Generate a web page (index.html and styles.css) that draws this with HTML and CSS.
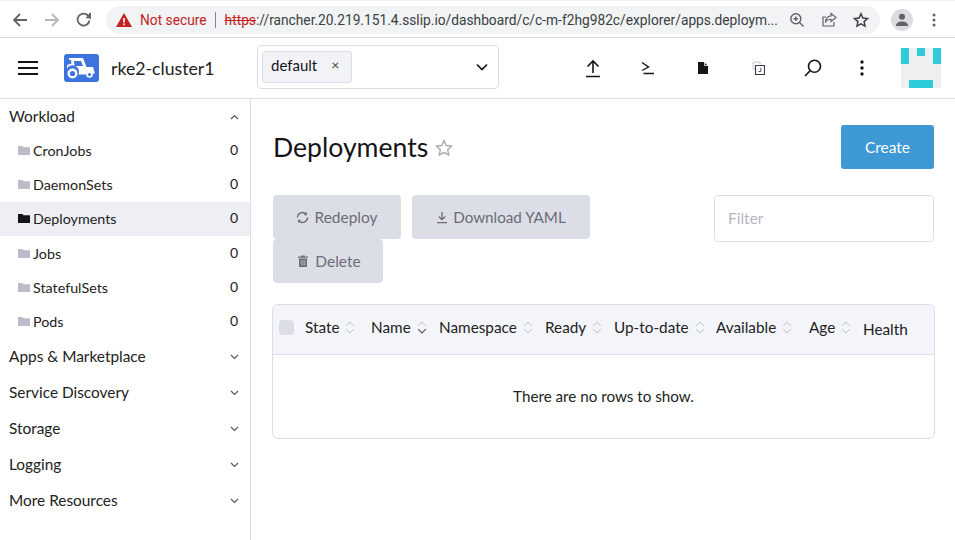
FILE: index.html
```html
<!DOCTYPE html>
<html lang="en">
<head>
<meta charset="utf-8">
<title>Deployments</title>
<link rel="stylesheet" href="styles.css">
</head>
<body>
<div class="chrome">
  <svg class="nav-ic" width="18" height="18" viewBox="0 0 18 18"><path d="M16 9H3M9 3 3 9l6 6" fill="none" stroke="#5f6368" stroke-width="1.8"/></svg>
  <svg class="nav-ic" width="18" height="18" viewBox="0 0 18 18"><path d="M2 9h13M9 3l6 6-6 6" fill="none" stroke="#b5b7ba" stroke-width="1.8"/></svg>
  <svg class="nav-ic" width="18" height="18" viewBox="0 0 18 18"><path d="M14.5 9.5a6 6 0 1 1-1.6-5.1L15 6.5V2" fill="none" stroke="#5f6368" stroke-width="1.8"/><path d="M15.8 1.6v5.6h-5.600z" fill="#5f6368"/></svg>
  <div class="omni">
    <svg width="16" height="14" viewBox="0 0 16 14"><path d="M8 0 16 14H0z" fill="#c5221f"/><path d="M7.2 5h1.6v4.6H7.2zM7.2 10.6h1.6v1.6H7.2z" fill="#fff"/></svg>
    <span class="insecure">Not secure</span>
    <span class="omni-sep"></span>
    <span class="url"><s class="https">https</s>://rancher.20.219.151.4.sslip.io/dashboard/c/c-m-f2hg982c/explorer/apps.deploym...</span>
    <span class="omni-icons">
      <svg width="16" height="16" viewBox="0 0 16 16"><circle cx="6.8" cy="6.8" r="5" fill="none" stroke="#5f6368" stroke-width="1.4"/><path d="m10.5 10.5 4 4M4.5 6.8h4.6M6.8 4.5v4.6" fill="none" stroke="#5f6368" stroke-width="1.4"/></svg>
      <svg width="16" height="16" viewBox="0 0 16 16"><path d="M13 10v4H2V5h3" fill="none" stroke="#5f6368" stroke-width="1.2"/><path d="M10 1.5 15 5.5 10 9.5V7.300C7.500 7.100 5.500 8 4.500 10.500 4.500 7 6.500 4.200 10 3.800Z" fill="none" stroke="#5f6368" stroke-width="1.2"/></svg>
      <svg width="16" height="16" viewBox="0 0 16 16"><path d="m8 1.800 1.900 4.200 4.600.5-3.400 3.100.9 4.500L8 11.800l-4 2.300.9-4.500L1.500 6.500l4.600-.5z" fill="none" stroke="#3c4043" stroke-width="1.500"/></svg>
    </span>
  </div>
  <span class="avatar"><svg width="14" height="14" viewBox="0 0 14 14"><circle cx="7" cy="3.800" r="3" fill="#5f6368"/><path d="M1 13c0-3.300 3-4.500 6-4.500s6 1.200 6 4.500z" fill="#5f6368"/></svg></span>
  <svg class="kebab-c" width="4" height="14" viewBox="0 0 4 14"><circle cx="2" cy="2" r="1.500" fill="#5f6368"/><circle cx="2" cy="7" r="1.500" fill="#5f6368"/><circle cx="2" cy="12" r="1.500" fill="#5f6368"/></svg>
</div>

<header class="topbar">
  <div class="burger"><i></i><i></i><i></i></div>
  <span class="logo">
    <svg width="35" height="28" viewBox="0 0 35 28"><path d="M5 4h14l3.500 9H29l2 6.500h-3a3.500 3.500 0 0 0-6 1H14.500a6.500 6.500 0 0 0-11.500-6v-3.500l4.500-1.500-.5-3.500H5zM10 7l.5 5h8.500l-2-5z" fill="#fff" fill-rule="evenodd"/><circle cx="8.500" cy="19.500" r="3.800" fill="none" stroke="#fff" stroke-width="2.400"/><circle cx="25.500" cy="20.500" r="2.400" fill="none" stroke="#fff" stroke-width="1.800"/></svg>
  </span>
  <span class="cluster">rke2-cluster1</span>
  <div class="ns-select">
    <span class="chip">default<span class="chip-x">×</span></span>
    <svg class="ns-caret" width="12" height="8" viewBox="0 0 12 8"><path d="m1 1.500 5 5 5-5" fill="none" stroke="#141419" stroke-width="1.700"/></svg>
  </div>
  <div class="tools">
    <span class="tool"><svg width="18" height="19" viewBox="0 0 18 19"><path d="M9 14V2M3.500 7.500 9 2l5.500 5.500M2 17.500h14" fill="none" stroke="#141419" stroke-width="1.600"/></svg></span>
    <span class="tool"><svg width="14" height="14" viewBox="0 0 14 14"><path d="M1 1.500 7.500 6 1 9.500M2.500 12.500H13" fill="none" stroke="#141419" stroke-width="1.400"/></svg></span>
    <span class="tool"><svg width="10" height="12" viewBox="0 0 10 12"><path d="M0 0h6l4 4v8H0z" fill="#141419"/><path d="M6.500 0v3.500H10" fill="none" stroke="#fff" stroke-width=".8"/></svg></span>
    <span class="tool"><svg width="13" height="14" viewBox="0 0 13 14"><path d="M8 3V1H1v7h2" fill="none" stroke="#a8a8b4" stroke-width="1" stroke-dasharray="1.500 1"/><path d="M3.500 4.500H12.500v9H3.500z" fill="none" stroke="#3f3f4a" stroke-width="1.200"/><path d="M8.800 6.800v3.700H6.500" fill="none" stroke="#3f3f4a" stroke-width=".9"/></svg></span>
    <span class="tool"><svg width="18" height="18" viewBox="0 0 18 18"><circle cx="10.500" cy="7.300" r="6" fill="none" stroke="#141419" stroke-width="1.600"/><path d="M6.200 11.600 1 17" fill="none" stroke="#141419" stroke-width="1.600"/></svg></span>
    <span class="tool tool-last"><svg width="4" height="16" viewBox="0 0 4 16"><circle cx="2" cy="2" r="1.700" fill="#141419"/><circle cx="2" cy="8" r="1.700" fill="#141419"/><circle cx="2" cy="14" r="1.700" fill="#141419"/></svg></span>
  </div>
  <svg class="identicon" width="40" height="40" viewBox="0 0 40 40"><rect width="40" height="40" fill="#efefef"/><path d="M0 0h8v16H0zM32 0h8v16h-8zM16 0h8v8h-8zM8 32h24v8H8z" fill="#2ccdd8"/></svg>
</header>

<div class="shell">
  <nav class="side">
    <div class="group group-open">Workload<svg width="9" height="6" viewBox="0 0 9 6"><path d="m1 5 3.500-3.500L8 5" fill="none" stroke="#55555f" stroke-width="1.200"/></svg></div>
    <a class="item"><svg class="folder" width="12" height="9" viewBox="0 0 12 9"><path d="M0 0h4.500l1 1.300H12V9H0z"/></svg><span>CronJobs</span><b>0</b></a>
    <a class="item"><svg class="folder" width="12" height="9" viewBox="0 0 12 9"><path d="M0 0h4.500l1 1.300H12V9H0z"/></svg><span>DaemonSets</span><b>0</b></a>
    <a class="item active"><svg class="folder" width="12" height="9" viewBox="0 0 12 9"><path d="M0 0h4.500l1 1.300H12V9H0z"/></svg><span>Deployments</span><b>0</b></a>
    <a class="item"><svg class="folder" width="12" height="9" viewBox="0 0 12 9"><path d="M0 0h4.500l1 1.300H12V9H0z"/></svg><span>Jobs</span><b>0</b></a>
    <a class="item"><svg class="folder" width="12" height="9" viewBox="0 0 12 9"><path d="M0 0h4.500l1 1.300H12V9H0z"/></svg><span>StatefulSets</span><b>0</b></a>
    <a class="item"><svg class="folder" width="12" height="9" viewBox="0 0 12 9"><path d="M0 0h4.500l1 1.300H12V9H0z"/></svg><span>Pods</span><b>0</b></a>
    <div class="group">Apps &amp; Marketplace<svg width="9" height="6" viewBox="0 0 9 6"><path d="m1 1 3.500 3.500L8 1" fill="none" stroke="#55555f" stroke-width="1.200"/></svg></div>
    <div class="group">Service Discovery<svg width="9" height="6" viewBox="0 0 9 6"><path d="m1 1 3.500 3.500L8 1" fill="none" stroke="#55555f" stroke-width="1.200"/></svg></div>
    <div class="group">Storage<svg width="9" height="6" viewBox="0 0 9 6"><path d="m1 1 3.500 3.500L8 1" fill="none" stroke="#55555f" stroke-width="1.200"/></svg></div>
    <div class="group">Logging<svg width="9" height="6" viewBox="0 0 9 6"><path d="m1 1 3.500 3.500L8 1" fill="none" stroke="#55555f" stroke-width="1.200"/></svg></div>
    <div class="group">More Resources<svg width="9" height="6" viewBox="0 0 9 6"><path d="m1 1 3.500 3.500L8 1" fill="none" stroke="#55555f" stroke-width="1.200"/></svg></div>
  </nav>

  <main class="main">
    <div class="title-row">
      <h1>Deployments</h1>
      <svg class="fav" width="18" height="17" viewBox="0 0 18 17"><path d="m9 1.500 2.300 5 5.400.6-4 3.700 1.100 5.300L9 13.400l-4.800 2.700 1.100-5.300-4-3.700 5.400-.6z" fill="none" stroke="#a9a9b3" stroke-width="1.400"/></svg>
      <button class="create">Create</button>
    </div>
    <div class="action-row">
      <div class="actions">
        <button class="act act-redeploy"><svg width="13" height="13" viewBox="0 0 13 13"><path d="M1.500 6.500a5 5 0 0 1 8.800-3.200M11.500 6.500a5 5 0 0 1-8.800 3.200" fill="none" stroke="#6c6c76" stroke-width="1.400"/><path d="M11 1v3.200H7.800zM2 12V8.800h3.200z" fill="#6c6c76"/></svg>Redeploy</button>
        <button class="act act-yaml"><svg width="12" height="13" viewBox="0 0 12 13"><path d="M6 1v7.500M2.800 5.500 6 8.700l3.200-3.200M1 11.700h10" fill="none" stroke="#6c6c76" stroke-width="1.300"/></svg>Download YAML</button>
        <button class="act act-delete"><svg width="10" height="12" viewBox="0 0 10 12"><path d="M0 1.500h3.200V.5h3.600v1H10v1.300H0zM1 3.600h8V12H1z" fill="#6c6c76"/><path d="M3.200 5v5.500M5 5v5.500M6.800 5v5.500" stroke="#dcdee7" stroke-width=".6"/></svg>Delete</button>
      </div>
      <div class="filter">Filter</div>
    </div>
    <section class="table">
      <div class="thead">
        <span class="check"></span>
        <span class="th c-state">State<svg class="sort" width="10" height="13" viewBox="0 0 9 12"><path d="M1 4.500 4.500 1 8 4.500M1 7.500 4.500 11 8 7.500" fill="none" stroke="#bcbcc4" stroke-width=".9"/></svg></span>
        <span class="th c-name">Name<svg class="sort" width="10" height="13" viewBox="0 0 9 12"><path d="M1 4.500 4.500 1 8 4.500" fill="none" stroke="#bcbcc4" stroke-width=".9"/><path d="M1 7.500 4.500 11 8 7.500" fill="none" stroke="#55555f" stroke-width="1.100"/></svg></span>
        <span class="th c-ns">Namespace<svg class="sort" width="10" height="13" viewBox="0 0 9 12"><path d="M1 4.500 4.500 1 8 4.500M1 7.500 4.500 11 8 7.500" fill="none" stroke="#bcbcc4" stroke-width=".9"/></svg></span>
        <span class="th c-ready">Ready<svg class="sort" width="10" height="13" viewBox="0 0 9 12"><path d="M1 4.500 4.500 1 8 4.500M1 7.500 4.500 11 8 7.500" fill="none" stroke="#bcbcc4" stroke-width=".9"/></svg></span>
        <span class="th c-utd">Up-to-date<svg class="sort" width="10" height="13" viewBox="0 0 9 12"><path d="M1 4.500 4.500 1 8 4.500M1 7.500 4.500 11 8 7.500" fill="none" stroke="#bcbcc4" stroke-width=".9"/></svg></span>
        <span class="th c-avail">Available<svg class="sort" width="10" height="13" viewBox="0 0 9 12"><path d="M1 4.500 4.500 1 8 4.500M1 7.500 4.500 11 8 7.500" fill="none" stroke="#bcbcc4" stroke-width=".9"/></svg></span>
        <span class="th c-age">Age<svg class="sort" width="10" height="13" viewBox="0 0 9 12"><path d="M1 4.500 4.500 1 8 4.500M1 7.500 4.500 11 8 7.500" fill="none" stroke="#bcbcc4" stroke-width=".9"/></svg></span>
        <span class="th c-health">Health</span>
      </div>
      <div class="empty">There are no rows to show.</div>
    </section>
  </main>
</div>
</body>
</html>
```

FILE: styles.css
```css
* { box-sizing: border-box; }
html, body { margin: 0; height: 100%; }
body { width: 955px; height: 540px; overflow: hidden; background: #fff; font-family: Lato, "Liberation Sans", sans-serif; color: #141419; }

.chrome { height: 38px; display: flex; align-items: center; padding: 1px 0 0 11px; border-top: 1px solid #f1f3f4; border-bottom: 1px solid #dadce0; }
.nav-ic { margin-right: 14px; flex: none; }
.omni { margin-left: -1px; width: 774px; height: 28px; background: #f1f3f4; border-radius: 14px; display: flex; align-items: center; padding-left: 10px; font-family: Roboto, "Liberation Sans", sans-serif; font-size: 13.750px; flex: none; }
.insecure { color: #c5221f; margin-left: 8px; }
.omni-sep { width: 1px; height: 16px; background: #80868b; margin: 0 9px 0 8px; }
.url { color: #3c4043; white-space: nowrap; width: 560px; }
.https { color: #c5221f; }
.omni-icons { display: flex; gap: 16px; margin-left: 4px; }
.avatar { width: 22px; height: 22px; border-radius: 50%; background: #dadce0; display: flex; align-items: center; justify-content: center; margin-left: 11px; flex: none; }
.kebab-c { margin-left: 19px; flex: none; }

.topbar { height: 61px; border-bottom: 1px solid #dcdee7; display: flex; align-items: center; }
.burger { width: 20px; margin-left: 18px; display: flex; flex-direction: column; gap: 4px; }
.burger i { display: block; height: 2px; background: #141419; }
.logo { width: 35px; height: 28px; margin-left: 26px; background: #3d74e0; border-radius: 3px; display: flex; align-items: center; justify-content: center; }
.cluster { font-size: 17.700px; margin-left: 12px; width: 146px; color: #222; }
.ns-select { width: 242px; height: 44px; border: 1px solid #dcdee7; border-radius: 4px; display: flex; align-items: center; padding-left: 4px; margin-top: -3px; position: relative; }
.chip { height: 32px; width: 90px; display: flex; align-items: center; padding: 0 0 4px 8px; background: #f2f3f7; border: 1px solid #dcdee7; border-radius: 3px; font-size: 15px; }
.chip-x { margin-left: 14px; font-size: 14px; color: #444; }
.ns-caret { position: absolute; right: 10px; top: 17px; }
.tools { display: flex; align-items: center; margin-left: 66.500px; }
.tool { width: 55px; display: flex; justify-content: center; align-items: center; }
.tool-last { width: 43px; }
.identicon { margin-left: 17.500px; flex: none; }

.shell { display: flex; height: 441px; }
.side { width: 251px; flex: none; border-right: 1px solid #dcdee7; }
.group { height: 35.800px; display: flex; align-items: center; justify-content: space-between; padding: 0 11px 0 9px; font-size: 15.400px; color: #222; }
.group svg { margin-top: 2px; }
.group-open { height: 34.400px; }
.item { height: 34.200px; display: flex; align-items: center; padding: 0 12px 0 18px; font-size: 14.300px; color: #222; }
.item span { margin-left: 3px; flex: 1; }
.item b { font-weight: 400; font-size: 14px; margin-top: -2px; }
.folder { fill: #bcbcc8; flex: none; }
.item.active { background: #eeeff4; }
.item.active .folder { fill: #141419; }

.main { flex: 1; padding: 26px 20px 0 21px; }
.title-row { display: flex; align-items: center; height: 44px; }
h1 { margin: 0 0 0 1px; font-size: 26.600px; font-weight: 400; line-height: 44px; }
.fav { margin-left: 7px; }
.create { margin-left: auto; margin-right: 1px; width: 93px; height: 44px; border: 0; border-radius: 3px; background: #3d98d3; color: #fff; font: 15.500px Lato, sans-serif; }
.action-row { display: flex; justify-content: space-between; align-items: flex-start; margin: 26px 1px 0; height: 88px; }
.actions { width: 340px; display: flex; flex-wrap: wrap; column-gap: 11px; }
.act { height: 44px; border: 0; border-radius: 4px; background: #dcdee7; color: #6c6c76; font: 15.500px Lato, sans-serif; display: flex; align-items: center; justify-content: center; gap: 5px; padding: 0; }
.act-redeploy { width: 128px; }
.act-yaml { width: 178px; font-size: 15.200px; }
.act-delete { width: 110px; gap: 7px; padding-left: 3px; }
.filter { width: 220px; height: 47px; border: 1px solid #dcdee7; border-radius: 4px; display: flex; align-items: center; padding: 0 0 2px 13px; color: #b6b6c2; font-size: 15.500px; }
.table { margin-top: 21px; height: 135px; border: 1px solid #dcdee7; border-radius: 6px; overflow: hidden; }
.thead { height: 50px; background: #f4f5fa; border-bottom: 1px solid #dcdee7; display: flex; align-items: center; padding: 0 0 4px 6px; }
.check { width: 15px; height: 15px; border-radius: 4px; background: #dcdee7; flex: none; margin-right: 11px; }
.th { font-size: 15.300px; color: #222; display: flex; align-items: center; gap: 6px; flex: none; margin-bottom: 2px; }
.sort { margin-top: 1px; }
.c-state { width: 66px; }
.c-name { width: 68px; }
.c-ns { width: 106px; }
.c-ready { width: 69px; }
.c-utd { width: 102px; }
.c-avail { width: 93px; }
.c-age { width: 54px; }
.c-health { margin: 2px 0 0; }
.empty { text-align: center; font-size: 15.200px; line-height: 82px; color: #222; }
```
